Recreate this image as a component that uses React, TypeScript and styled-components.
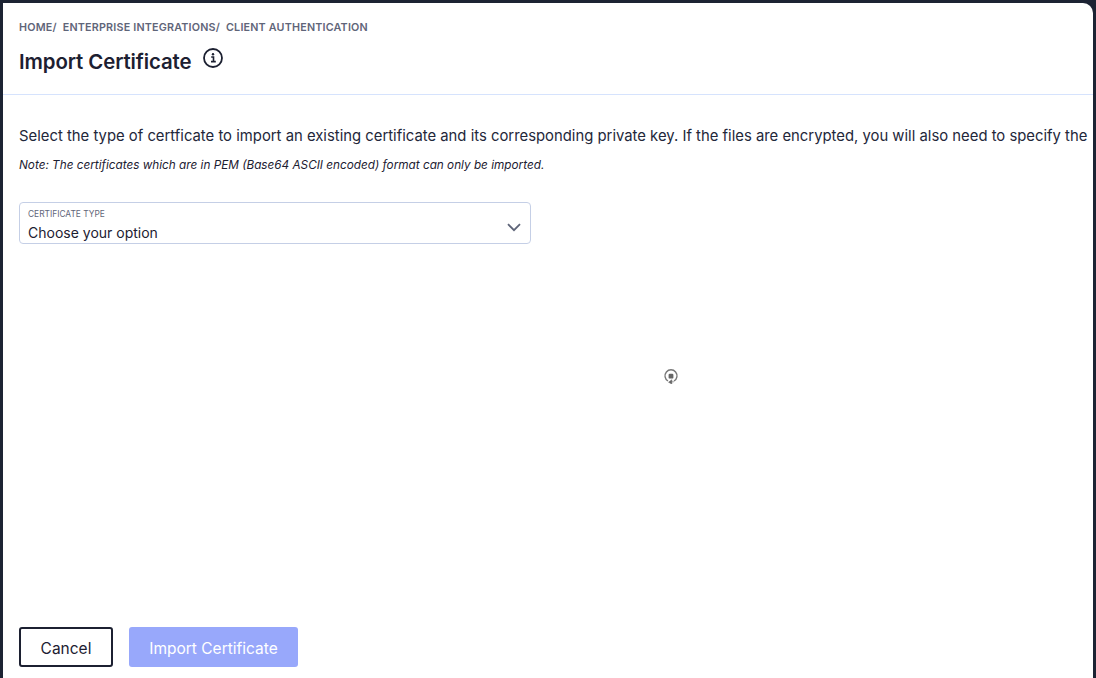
import { FC } from "react";
import styled, { createGlobalStyle } from "styled-components";

const GlobalStyle = createGlobalStyle`
  html, body {
    margin: 0;
    height: 100%;
    background: #1c2333;
    overflow: hidden;
  }
  body {
    font-family: Inter, "Noto Sans", sans-serif;
  }
`;

const Frame = styled.div`
  box-sizing: border-box;
  width: 1096px;
  height: 678px;
  padding: 3px 3px 0 3px;
`;

const Panel = styled.main`
  position: relative;
  height: 100%;
  background: #fff;
  border-radius: 0 10px 0 0;
  display: flex;
  flex-direction: column;
  overflow: hidden;
`;

const Header = styled.header`
  height: 92px;
  flex-shrink: 0;
  box-sizing: border-box;
  padding: 18px 16px 0;
  border-bottom: 1px solid #d6e3fd;
`;

const Breadcrumbs = styled.nav`
  display: flex;
  gap: 6px;
  font-size: 10.74px;
  line-height: 14px;
  font-weight: 600;
  letter-spacing: 0.2px;
  color: #5f6579;
`;

const TitleRow = styled.div`
  display: flex;
  align-items: flex-start;
  gap: 12px;
  margin-top: 13px;
`;

const Title = styled.h1`
  margin: 0;
  font-size: 20.4px;
  line-height: 28px;
  font-weight: 600;
  letter-spacing: -0.1px;
  color: #1c2031;
`;

const InfoButton = styled.span`
  display: flex;
  color: #1c2031;
`;

const Body = styled.section`
  flex: 1;
  padding: 31px 16px 0;
  display: flex;
  flex-direction: column;
`;

const Description = styled.p`
  margin: 0;
  font-size: 14.85px;
  line-height: 20px;
  color: #23273a;
  white-space: nowrap;
`;

const Note = styled.p`
  margin: 11px 0 0;
  font-size: 11.75px;
  line-height: 16px;
  font-style: italic;
  color: #1c2031;
`;

const Select = styled.div`
  position: relative;
  box-sizing: border-box;
  width: 512px;
  height: 42px;
  margin-top: 29px;
  padding: 5px 8px 0;
  border: 1px solid #c5cfe6;
  border-radius: 4px;
`;

const SelectLabel = styled.div`
  font-size: 8.4px;
  line-height: 12px;
  color: #5f6579;
`;

const SelectValue = styled.div`
  margin-top: 4px;
  font-size: 14px;
  line-height: 18px;
  color: #1c2031;
`;

const Chevron = styled.svg`
  position: absolute;
  right: 9px;
  top: 20px;
`;

const Footer = styled.footer`
  display: flex;
  gap: 16px;
  padding: 0 16px 11px;
`;

const Button = styled.button<{ $primary?: boolean }>`
  box-sizing: border-box;
  height: 40px;
  padding: 2px 0 0;
  border-radius: 3px;
  font-family: inherit;
  font-size: 15.5px;
  color: ${(props) => (props.$primary ? "#fff" : "#1c2031")};
  background: ${(props) => (props.$primary ? "#98a8fb" : "#fff")};
  border: ${(props) => (props.$primary ? "none" : "2px solid #1c2031")};
  width: ${(props) => (props.$primary ? "169px" : "94px")};
`;

const Cursor = styled.svg`
  position: absolute;
  left: 660px;
  top: 365px;
`;

const crumbs = ["HOME/", "ENTERPRISE INTEGRATIONS/", "CLIENT AUTHENTICATION"];

const App: FC = () => (
  <Frame>
    <GlobalStyle />
    <Panel>
      <Header>
        <Breadcrumbs>
          {crumbs.map((crumb) => (
            <span key={crumb}>{crumb}</span>
          ))}
        </Breadcrumbs>
        <TitleRow>
          <Title>Import Certificate</Title>
          <InfoButton>
            <svg width="20" height="20" viewBox="0 0 20 20" fill="none">
              <circle cx="10" cy="10" r="9" stroke="currentColor" strokeWidth="1.8" />
              <circle cx="10" cy="6.2" r="1.2" fill="currentColor" />
              <path d="M8.2 9h2.3v4.4M8 13.6h4.8" stroke="currentColor" strokeWidth="1.6" />
            </svg>
          </InfoButton>
        </TitleRow>
      </Header>
      <Body>
        <Description>
          Select the type of certficate to import an existing certificate and its corresponding private key. If the files are encrypted, you will also need to specify the
        </Description>
        <Note>
          Note: The certificates which are in PEM (Base64 ASCII encoded) format can only be imported.
        </Note>
        <Select>
          <SelectLabel>CERTIFICATE TYPE</SelectLabel>
          <SelectValue>Choose your option</SelectValue>
          <Chevron width="14" height="9" viewBox="0 0 14 9" fill="none">
            <path d="M1 1.2l6 6 6-6" stroke="#5f6579" strokeWidth="1.8" />
          </Chevron>
        </Select>
      </Body>
      <Footer>
        <Button>Cancel</Button>
        <Button $primary>Import Certificate</Button>
      </Footer>
      <Cursor width="16" height="16" viewBox="0 0 16 16" fill="none">
        <path d="M5 13a6 6 0 1 1 6 0" stroke="#777" strokeWidth="1.4" />
        <rect x="5.6" y="5.8" width="4.8" height="4.8" rx="1.2" fill="#666" />
        <path d="M5.6 14.2l3.2-2.4v4.2zM8 13.8h3" fill="#666" stroke="#666" strokeWidth="0.6" />
      </Cursor>
    </Panel>
  </Frame>
);

export default App;
